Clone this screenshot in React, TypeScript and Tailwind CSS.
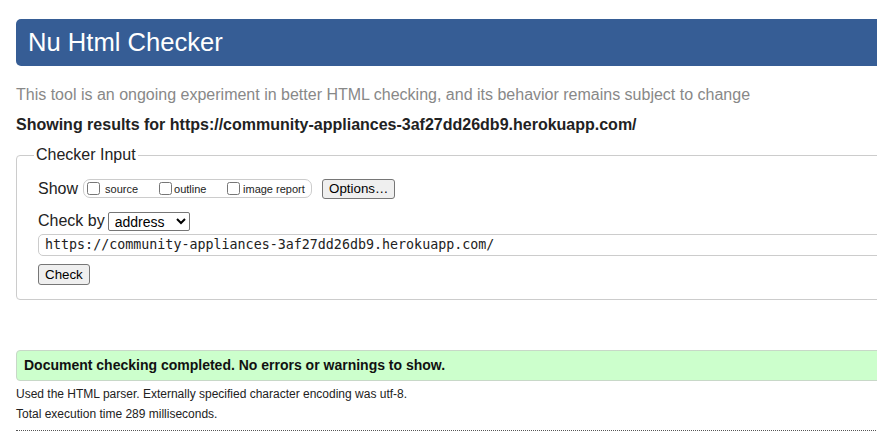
import React from 'react';

const URL = 'https://community-appliances-3af27dd26db9.herokuapp.com/';

export default function App() {
  return (
    <div className="w-[877px] h-[433px] overflow-hidden bg-white text-[#222] font-['Liberation_Sans',Arial,sans-serif]">
      <div className="w-[940px] pl-4 pt-[19px]">
        {/* Title bar */}
        <h1 className="h-[47px] flex items-center pl-3 bg-[#365d95] text-white text-[25.6px] rounded-l-[5px]">
          Nu Html Checker
        </h1>

        <p className="mt-[19px] text-[16px] leading-[20px] text-[#888]">
          This tool is an ongoing experiment in better HTML checking, and its behavior remains subject to change
        </p>
        <p className="mt-[10px] text-[16px] leading-[20px] font-bold text-[#222]">
          Showing results for {URL}
        </p>

        {/* Checker input */}
        <fieldset className="mt-[11px] h-[154px] border border-[#ccc] rounded-l-[4px] pl-[15px] pr-0 pt-[14px]">
          <legend className="ml-[2px] px-[2px] text-[16px] leading-[18px] text-[#222]">Checker Input</legend>

          <div className="pl-[6px]">
            <div className="flex items-center h-[21px]">
              <span className="text-[16px] mr-[5px]">Show</span>
              <span className="flex items-center h-[19px] w-[229px] border border-[#ccc] rounded-[7px] pl-[3px] text-[11px]">
                <label className="flex items-end w-[72px]">
                  <input type="checkbox" className="m-0 w-[13px] h-[13px]" />
                  <span className="ml-[5px] leading-[12px]">source</span>
                </label>
                <label className="flex items-end w-[68px]">
                  <input type="checkbox" className="m-0 w-[13px] h-[13px]" />
                  <span className="ml-[2px] leading-[12px]">outline</span>
                </label>
                <label className="flex items-end">
                  <input type="checkbox" className="m-0 w-[13px] h-[13px]" />
                  <span className="ml-[3px] leading-[12px]">image report</span>
                </label>
              </span>
              <button className="ml-[10px] h-[20px] px-[6px] bg-[#efefef] border border-[#767676] rounded-[3px] text-[13.33px] leading-[16px] text-black">
                Options…
              </button>
            </div>

            <div className="flex items-center mt-[12px] h-[20px]">
              <span className="text-[16px] mr-[3px]">Check by</span>
              <select defaultValue="address" className="w-[82px] h-[19px] border border-[#767676] rounded-[2px] text-[14px] leading-[16px] text-black bg-white pl-[2px]">
                <option value="address">address</option>
                <option value="file">file upload</option>
                <option value="text">text input</option>
              </select>
            </div>

            <div className="mt-[3px] h-[22px] flex items-center border border-[#ccc] rounded-l-[5px] pl-[6px] font-['DejaVu_Sans_Mono',monospace] text-[13.33px] text-[#222]">
              {URL}
            </div>

            <button className="mt-[8px] h-[21px] px-[6px] bg-[#efefef] border border-[#767676] rounded-[3px] text-[13.33px] leading-[16px] text-black">
              Check
            </button>
          </div>
        </fieldset>

        {/* Result */}
        <div className="mt-[50px] h-[31px] flex items-center pl-[7px] bg-[#ccffcc] border border-[#c8d8c8] rounded-l-[4px] text-[14px] font-bold text-[#111]">
          Document checking completed. No errors or warnings to show.
        </div>
        <p className="mt-[3px] text-[12px] leading-[20px] text-[#222]">
          Used the HTML parser. Externally specified character encoding was utf-8.
        </p>
        <p className="text-[12px] leading-[20px] text-[#222]">Total execution time 289 milliseconds.</p>
        <div className="mt-[6px] border-t border-dotted border-[#555]" />
      </div>
    </div>
  );
}
